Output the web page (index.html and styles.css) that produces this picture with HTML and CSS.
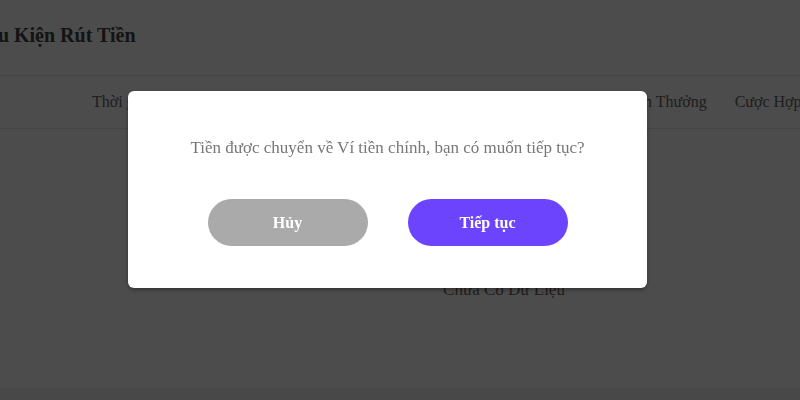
FILE: index.html
```html
<!DOCTYPE html>
<html lang="vi">
<head>
<meta charset="utf-8">
<title>Điều Kiện Rút Tiền</title>
<link rel="stylesheet" href="styles.css">
</head>
<body>
<div class="page">
  <header class="top">
    <h1 class="title">Điều Kiện Rút Tiền</h1>
  </header>
  <nav class="tabs">
    <span class="tab">Thời gian</span>
    <span class="tab">Tiền Nạp</span>
    <span class="tab">Nạp Tiền Lần Đầu</span>
    <span class="tab">Số Tiền Rút</span>
    <span class="tab">Vòng Cược</span>
    <span class="tab">Tiền Thưởng</span>
    <span class="tab">Cược Hợp Lệ</span>
  </nav>
  <main class="content">
    <p class="empty">Chưa Có Dữ Liệu</p>
  </main>
  <footer class="foot"></footer>
</div>
<div class="overlay">
  <div class="dialog">
    <p class="msg">Tiền được chuyển về Ví tiền chính, bạn có muốn tiếp tục?</p>
    <div class="actions">
      <button class="btn btn-cancel">Hủy</button>
      <button class="btn btn-ok">Tiếp tục</button>
    </div>
  </div>
</div>
</body>
</html>
```
FILE: styles.css
```css
html, body {
  margin: 0;
  padding: 0;
  height: 100%;
  overflow: hidden;
  background: #fff;
  font-family: "Liberation Serif", "Times New Roman", serif;
}
.page {
  display: flex;
  flex-direction: column;
  height: 400px;
}
.top {
  height: 75px;
  border-bottom: 1px solid #e6e6e6;
  display: flex;
  align-items: center;
  flex-shrink: 0;
}
.title {
  margin: 0 0 4px -31px;
  font-size: 20px;
  font-weight: bold;
  color: #444;
  white-space: nowrap;
}
.tabs {
  height: 52px;
  border-bottom: 1px solid #e6e6e6;
  display: flex;
  align-items: center;
  gap: 28px;
  padding-left: 92px;
  overflow: hidden;
  flex-shrink: 0;
}
.tab {
  font-size: 16px;
  color: #666;
  white-space: nowrap;
  flex-shrink: 0;
}
.content {
  flex: 1;
  display: flex;
  justify-content: center;
  padding-left: 208px;
}
.empty {
  margin: 151px 0 0;
  font-size: 17px;
  color: #666;
}
.foot {
  height: 12px;
  background: #f0f0f0;
  flex-shrink: 0;
}
.overlay {
  position: fixed;
  inset: 0;
  background: rgba(0, 0, 0, 0.7);
}
.dialog {
  position: absolute;
  left: 128px;
  top: 91px;
  width: 519px;
  box-sizing: border-box;
  padding: 46px 0 42px;
  background: #fff;
  border-radius: 6px;
  box-shadow: 0 2px 4px rgba(0, 0, 0, 0.35);
  text-align: center;
}
.msg {
  margin: 0;
  font-size: 17px;
  line-height: 22px;
  color: #777;
}
.actions {
  margin-top: 40px;
  display: flex;
  justify-content: center;
  gap: 40px;
}
.btn {
  width: 160px;
  height: 47px;
  border: none;
  border-radius: 24px;
  color: #fff;
  font-family: "Liberation Serif", "Times New Roman", serif;
  font-size: 16px;
  font-weight: bold;
  cursor: pointer;
}
.btn-cancel {
  background: #aaaaaa;
}
.btn-ok {
  background: #6c44fd;
}
```
